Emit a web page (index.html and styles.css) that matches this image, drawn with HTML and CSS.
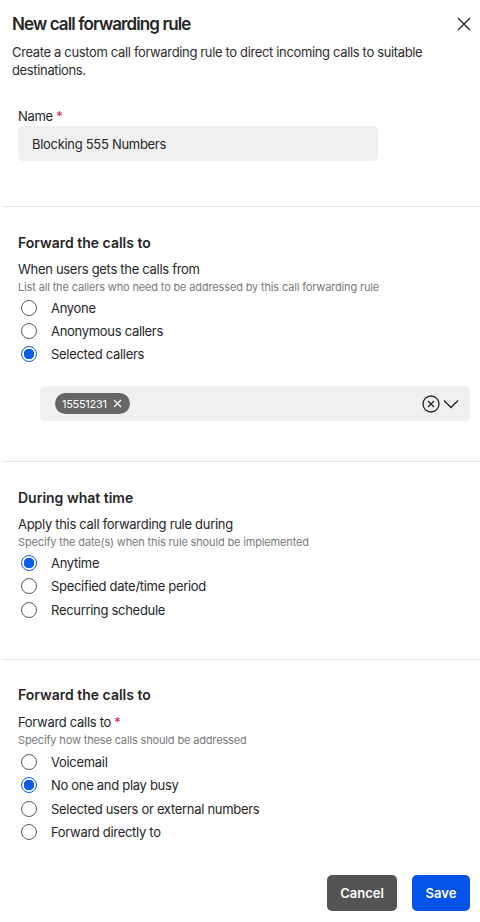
FILE: index.html
```html
<!DOCTYPE html>
<html>
<head>
<meta charset="utf-8">
<link rel="stylesheet" href="styles.css">
</head>
<body>
<div class="panel">
  <header class="head">
    <h1 class="title">New call forwarding rule</h1>
    <button class="close" aria-label="Close">
      <svg width="16" height="16" viewBox="0 0 16 16"><path d="M2 2L14 14M14 2L2 14" stroke="#333" stroke-width="1.5" fill="none"/></svg>
    </button>
  </header>
  <p class="desc">Create a custom call forwarding rule to direct incoming calls to suitable destinations.</p>

  <section class="sec sec-name">
    <div class="label">Name <span class="req">*</span></div>
    <div class="input">Blocking 555 Numbers</div>
  </section>

  <hr class="divider">

  <section class="sec s2">
    <h2 class="h2">Forward the calls to</h2>
    <div class="label lbl">When users gets the calls from</div>
    <div class="sub">List all the callers who need to be addressed by this call forwarding rule</div>
    <div class="radios">
      <div class="radio"><span class="dot"></span>Anyone</div>
      <div class="radio"><span class="dot"></span>Anonymous callers</div>
      <div class="radio"><span class="dot on"></span>Selected callers</div>
    </div>
    <div class="combo">
      <span class="chip">15551231
        <svg width="9" height="9" viewBox="0 0 9 9"><path d="M1 1L8 8M8 1L1 8" stroke="#fff" stroke-width="1.2" fill="none"/></svg>
      </span>
      <span class="combo-icons">
        <svg width="18" height="18" viewBox="0 0 18 18"><circle cx="9" cy="9" r="8" stroke="#222" stroke-width="1.3" fill="none"/><path d="M6 6L12 12M12 6L6 12" stroke="#222" stroke-width="1.3" fill="none"/></svg>
        <svg width="16" height="10" viewBox="0 0 16 10"><path d="M1 1.5L8 8.5L15 1.5" stroke="#222" stroke-width="1.3" fill="none"/></svg>
      </span>
    </div>
  </section>

  <hr class="divider">

  <section class="sec s3">
    <h2 class="h2">During what time</h2>
    <div class="label lbl">Apply this call forwarding rule during</div>
    <div class="sub">Specify the date(s) when this rule should be implemented</div>
    <div class="radios">
      <div class="radio"><span class="dot on"></span>Anytime</div>
      <div class="radio"><span class="dot"></span>Specified date/time period</div>
      <div class="radio"><span class="dot"></span>Recurring schedule</div>
    </div>
  </section>

  <hr class="divider">

  <section class="sec s4">
    <h2 class="h2">Forward the calls to</h2>
    <div class="label lbl">Forward calls to <span class="req">*</span></div>
    <div class="sub">Specify how these calls should be addressed</div>
    <div class="radios">
      <div class="radio"><span class="dot"></span>Voicemail</div>
      <div class="radio"><span class="dot on"></span>No one and play busy</div>
      <div class="radio"><span class="dot"></span>Selected users or external numbers</div>
      <div class="radio"><span class="dot"></span>Forward directly to</div>
    </div>
  </section>

  <footer class="foot">
    <button class="btn cancel">Cancel</button>
    <button class="btn save">Save</button>
  </footer>
</div>
</body>
</html>
```

FILE: styles.css
```css
* { box-sizing: border-box; }
html, body { margin: 0; padding: 0; background: #fff; }
body {
  font-family: Inter, "Noto Sans", "Liberation Sans", sans-serif;
  color: #262626;
  width: 480px;
  height: 922px;
  overflow: hidden;
}
.panel { display: flex; flex-direction: column; }
.head {
  display: flex;
  justify-content: space-between;
  align-items: center;
  padding: 12px 8px 0 12px;
}
.title {
  margin: 0;
  font-size: 17px;
  line-height: 24px;
  font-weight: 600;
  letter-spacing: -0.9px;
  color: #262626;
}
.close {
  border: 0;
  background: none;
  padding: 0;
  width: 16px;
  height: 16px;
  display: flex;
}
.desc {
  margin: 7px 0 0 12px;
  padding-right: 30px;
  font-size: 13px;
  line-height: 18px;
  letter-spacing: -0.35px;
  color: #2e2e2e;
}
.sec { padding-left: 18px; }
.sec-name { padding-top: 28px; padding-bottom: 45px; }
.label {
  font-size: 13px;
  line-height: 18px;
  letter-spacing: -0.3px;
  color: #262626;
}
.req { color: #d4263e; }
.input {
  margin-top: 1px;
  width: 360px;
  height: 35px;
  background: #f0f0f0;
  border-radius: 5px;
  padding-left: 14px;
  display: flex;
  align-items: center;
  font-size: 13px;
  letter-spacing: -0.3px;
  color: #262626;
}
.divider {
  border: 0;
  height: 1px;
  background: #e8e8e8;
  margin: 0 0 0 2px;
}
.s2 { padding-top: 26px; padding-bottom: 40px; }
.s3 { padding-top: 26px; padding-bottom: 38px; }
.s4 { padding-top: 25px; }
.h2 {
  margin: 0;
  font-size: 14px;
  line-height: 20px;
  font-weight: 600;
  color: #262626;
}
.lbl { margin-top: 7px; }
.s4 .lbl { margin-top: 8px; }
.sub {
  margin-top: 1px;
  font-size: 11px;
  line-height: 16px;
  letter-spacing: -0.15px;
  color: #7a7a7a;
}
.radios { margin-top: 1px; display: flex; flex-direction: column; }
.s4 .radios { margin-top: 2px; }
.radio {
  height: 23.4px;
  display: flex;
  align-items: center;
  font-size: 13px;
  letter-spacing: -0.3px;
  color: #262626;
}
.dot {
  width: 16px;
  height: 16px;
  margin-left: 3px;
  margin-right: 14px;
  border-radius: 50%;
  border: 1.5px solid #5c5c5c;
  background: #fff;
  flex: none;
}
.dot.on {
  border-color: #0b5ce6;
  background: radial-gradient(circle, #0b5ce6 0 5px, #fff 5.5px);
}
.combo {
  margin: 20px 10px 0 22px;
  height: 35px;
  background: #f0f0f0;
  border-radius: 5px;
  display: flex;
  align-items: center;
  justify-content: space-between;
  padding: 0 11px 0 15px;
}
.chip {
  height: 21px;
  background: #666;
  color: #fff;
  border-radius: 11px;
  font-size: 11px;
  letter-spacing: -0.3px;
  display: flex;
  align-items: center;
  gap: 6px;
  padding: 0 8px 0 7px;
}
.combo-icons { display: flex; align-items: center; gap: 3px; }
.foot {
  display: flex;
  justify-content: flex-end;
  gap: 15px;
  padding-right: 10px;
  margin-top: 31px;
}
.btn {
  border: 0;
  height: 36px;
  border-radius: 5px;
  font-family: inherit;
  font-size: 13px;
  font-weight: 600;
  color: #fff;
}
.cancel { width: 70px; background: #545454; }
.save { width: 58px; background: #0353e9; }
```
